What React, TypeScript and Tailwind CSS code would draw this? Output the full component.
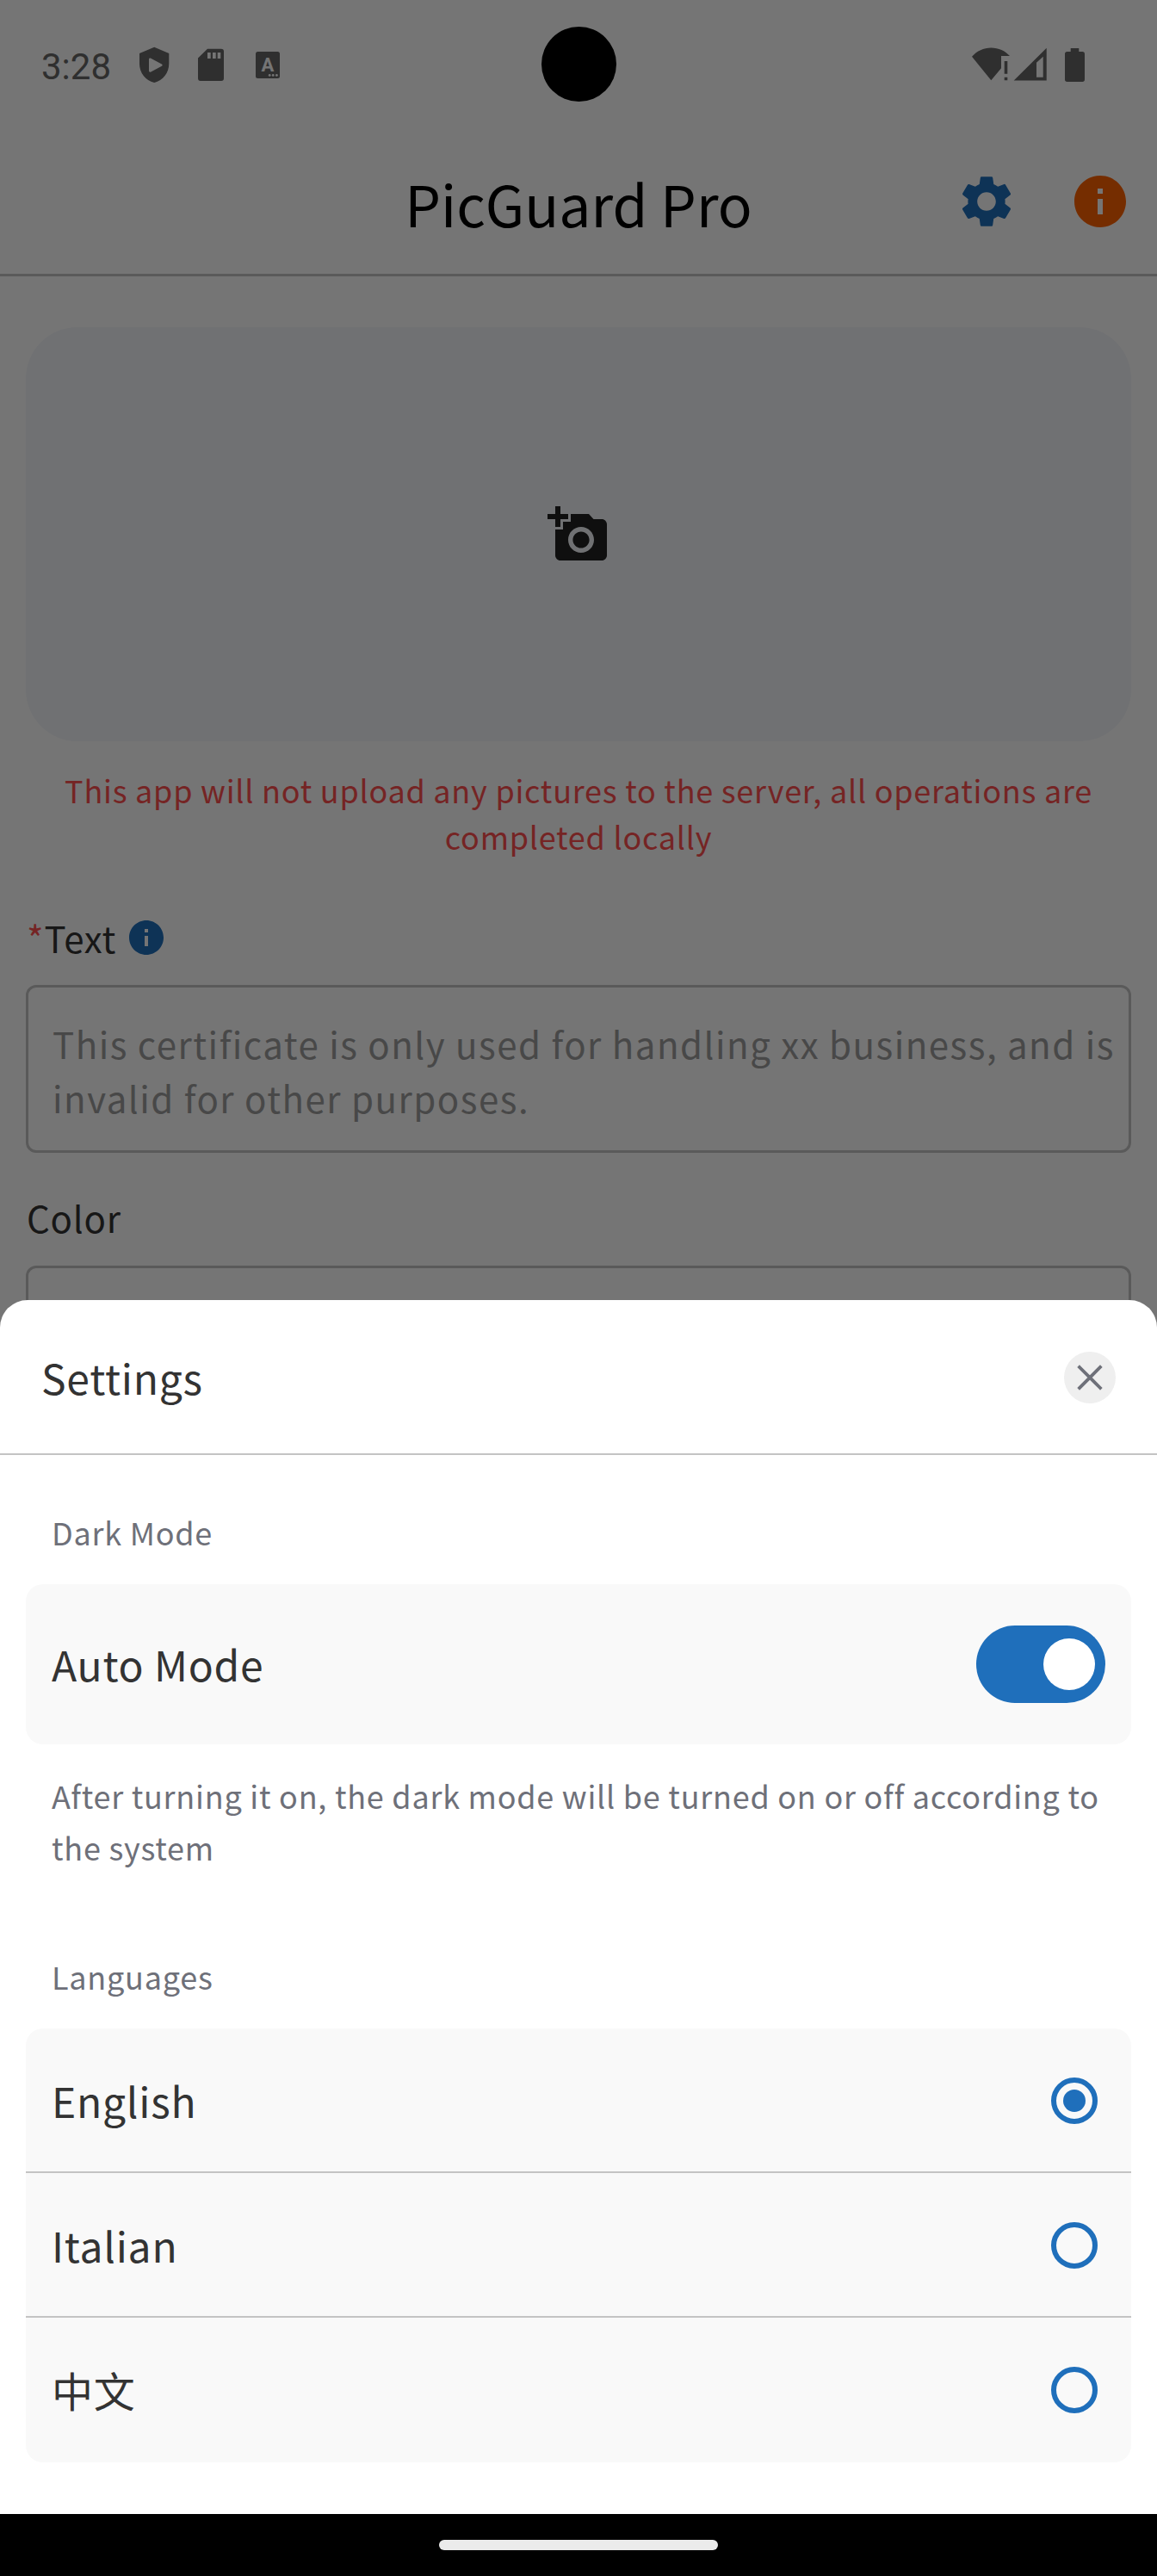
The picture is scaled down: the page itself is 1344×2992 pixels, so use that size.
import { MdAddAPhoto, MdInfo, MdSettings } from "react-icons/md";

const languages = [
  { label: "English", selected: true },
  { label: "Italian", selected: false },
  { label: "中文", selected: false },
];

function ShieldIcon() {
  return (
    <svg viewBox="162 54 35 43" className="h-[43px] w-[35px]">
      <path
        fillRule="evenodd"
        fill="currentColor"
        d="M179.2 54.7 196.3 62v12c0 10.500-7 19.500-17.100 22C169 93.500 162 84.500 162 74V62zM173 69v13.200c0 1.400 1.300 1.700 2.300 1.200l12.600-6.600c1-.6 1-1.800 0-2.400l-12.600-6.600c-1-.5-2.300-.2-2.300 1.200z"
      />
    </svg>
  );
}

function SdCardIcon() {
  return (
    <svg viewBox="230 56 30 38" className="h-[38px] w-[30px]">
      <path
        fillRule="evenodd"
        fill="currentColor"
        d="M241 56.800h16a3 3 0 0 1 3 3V91a3 3 0 0 1-3 3h-24a3 3 0 0 1-3-3V67.500zM241 61v7h3.700v-7zm6 0v7h3.700v-7zm5.700 0v7h3.600v-7z"
      />
    </svg>
  );
}

function KeyboardIcon() {
  return (
    <svg viewBox="297 60 28 31" className="h-[31px] w-[28px]">
      <rect x="297" y="60" width="28" height="31" rx="2.500" fill="currentColor" />
      <text x="311" y="82.800" textAnchor="middle" className="fill-white font-['Roboto'] text-[22px] font-bold">
        A
      </text>
      <g className="fill-white">
        <circle cx="313.200" cy="87.400" r="1.400" />
        <circle cx="317.200" cy="87.400" r="1.400" />
        <circle cx="321.400" cy="87.400" r="1.400" />
      </g>
    </svg>
  );
}

function NetworkIcons() {
  return (
    <svg viewBox="1129 55 87 39" className="h-[39px] w-[87px]">
      <g fill="currentColor">
        <path d="M1151.300 93.300 1129 65.700C1135 59 1142.600 55.400 1151.300 55.400S1167.500 58.800 1173 65H1163V79.300z" />
        <path d="M1166.700 71h3.600v14.700h-3.600zM1166.700 89.700h3.600v3.500h-3.600z" />
        <path fillRule="evenodd" d="M1177.700 93.500 1215.700 55.700V93.500zM1204 72.700v17h7.700v-24z" />
      </g>
    </svg>
  );
}

function BatteryIcon() {
  return (
    <svg viewBox="1237 56 23 39" className="h-[39px] w-[23px]">
      <path
        fill="currentColor"
        d="M1243.700 56h9.600v4h4a2.700 2.700 0 0 1 2.700 2.700v29.600a2.700 2.700 0 0 1-2.700 2.700h-17.600a2.700 2.700 0 0 1-2.700-2.700V62.700a2.700 2.700 0 0 1 2.700-2.700h4z"
      />
    </svg>
  );
}

function StatusBar() {
  return (
    <div className="flex h-[144px] items-start justify-between pr-[84px] pl-12 text-[#666666]">
      <div className="flex">
        <span className="mt-[53px] w-[114px] font-['Roboto'] text-[42px] leading-[49px]">3:28</span>
        <div className="mt-[54px] flex items-start">
          <ShieldIcon />
          <div className="mt-[2px] ml-[33px] flex">
            <SdCardIcon />
          </div>
          <div className="mt-[6px] ml-[37px] flex">
            <KeyboardIcon />
          </div>
        </div>
      </div>
      <div className="mt-[55px] flex gap-[21px]">
        <NetworkIcons />
        <div className="mt-px flex">
          <BatteryIcon />
        </div>
      </div>
    </div>
  );
}

function AppHeader() {
  return (
    <header className="relative flex h-[177px] justify-center border-b-[3px] border-[#c4c4c4] pt-[43px]">
      <h1 className="text-[66px] leading-[96px] text-black">PicGuard Pro</h1>
      <div className="absolute top-[54px] right-[30px] flex gap-[60px]">
        <MdSettings className="size-[72px] text-[#1f6fbb]" />
        <MdInfo className="size-[72px] text-[#ff6200]" />
      </div>
    </header>
  );
}

function EditorForm() {
  return (
    <main className="px-[30px] pt-[59px] text-[42px] leading-[63px] text-[#333333]">
      <div className="flex h-[481px] items-center justify-center rounded-[60px] bg-[#f4f6fa]">
        <MdAddAPhoto className="size-[72px] text-[#212121]" />
      </div>
      <p className="mt-[29px] text-center text-[36px] leading-[54px] tracking-[0.75px] text-[#ff5050]">
        This app will not upload any pictures to the server, all operations are completed locally
      </p>
      <div className="mt-[59px] flex pl-px">
        <span className="tracking-[0.75px] text-[#ff5050]">*</span>
        <span className="tracking-[0.75px]">Text</span>
        <MdInfo className="mt-2 ml-[11px] size-12 text-[#1f6fbb]" />
      </div>
      <div className="mt-6 h-[195px] rounded-[12px] border-[3px] border-[#c4c4c4] pt-[33px] pr-3 pl-7 tracking-[1.5px] text-[#9d9d9d]">
        This certificate is only used for handling xx business, and is invalid for other purposes.
      </div>
      <div className="mt-[43px] pl-px tracking-[0.75px]">Color</div>
      <div className="mt-[25px] h-[150px] rounded-[12px] border-[3px] border-[#c4c4c4]" />
    </main>
  );
}

function Radio({ selected }: { selected: boolean }) {
  return (
    <span className="flex size-[54px] items-center justify-center rounded-full border-[6px] border-[#1f6fbb]">
      {selected && <span className="size-[26px] rounded-full bg-[#1f6fbb]" />}
    </span>
  );
}

function SettingsSheet() {
  return (
    <section className="h-[1410px] rounded-t-[32px] bg-white text-[#333333]">
      <div className="flex h-[180px] items-start justify-between border-b-2 border-[#c4c4c4] pt-[54px] pr-12 pl-12">
        <h2 className="text-[48px] leading-[70px] tracking-[0.75px]">Settings</h2>
        <button className="mt-[6px] flex size-[60px] items-center justify-center rounded-full bg-[#efefef]">
          <svg viewBox="0 0 60 60" className="size-[60px] text-[#6e7079]">
            <path d="M18 18 42 42M42 18 18 42" stroke="currentColor" strokeWidth="3.800" strokeLinecap="square" />
          </svg>
        </button>
      </div>
      <div className="px-[30px] pt-[62px]">
        <h3 className="px-[30px] text-[36px] leading-[54px] tracking-[0.75px] text-[#6e7079]">Dark Mode</h3>
        <div className="mt-[34px] flex h-[186px] items-center justify-between rounded-[20px] bg-[#f9f9f9] px-[30px]">
          <span className="pb-[2px] text-[48px] leading-[70px] tracking-[0.75px]">Auto Mode</span>
          <span className="flex h-[90px] w-[150px] items-center justify-end rounded-full bg-[#1f6fbb] pr-3">
            <span className="size-[60px] rounded-full bg-white" />
          </span>
        </div>
        <p className="mt-[29px] px-[30px] text-[36px] leading-[60px] tracking-[0.75px] text-[#6e7079]">
          After turning it on, the dark mode will be turned on or off according to the system
        </p>
        <h3 className="mt-[93px] px-[30px] text-[36px] leading-[54px] tracking-[0.75px] text-[#6e7079]">Languages</h3>
        <div className="mt-[34px] overflow-hidden rounded-[20px] bg-[#f9f9f9]">
          {languages.map(({ label, selected }) => (
            <div
              key={label}
              className="flex h-[168px] items-start justify-between border-b-2 border-[#c4c4c4] pr-[39px] pl-[30px] last:border-transparent"
            >
              <span className="mt-12 text-[48px] leading-[70px] tracking-[0.75px]">{label}</span>
              <span className="mt-[57px] flex">
                <Radio selected={selected} />
              </span>
            </div>
          ))}
        </div>
      </div>
    </section>
  );
}

export default function App() {
  return (
    <div className="relative h-[2992px] w-[1344px] overflow-hidden bg-white font-['Noto_Sans_CJK_SC',sans-serif]">
      <StatusBar />
      <AppHeader />
      <EditorForm />
      <div className="absolute inset-0 flex flex-col justify-end bg-black/54">
        <SettingsSheet />
        <div className="flex h-[72px] justify-center bg-black pt-[30px]">
          <div className="h-3 w-[324px] rounded-full bg-[#ebebeb]" />
        </div>
      </div>
      {/* Front camera cut-out */}
      <div className="absolute top-[31px] left-[629px] size-[87px] rounded-full bg-black" />
    </div>
  );
}
